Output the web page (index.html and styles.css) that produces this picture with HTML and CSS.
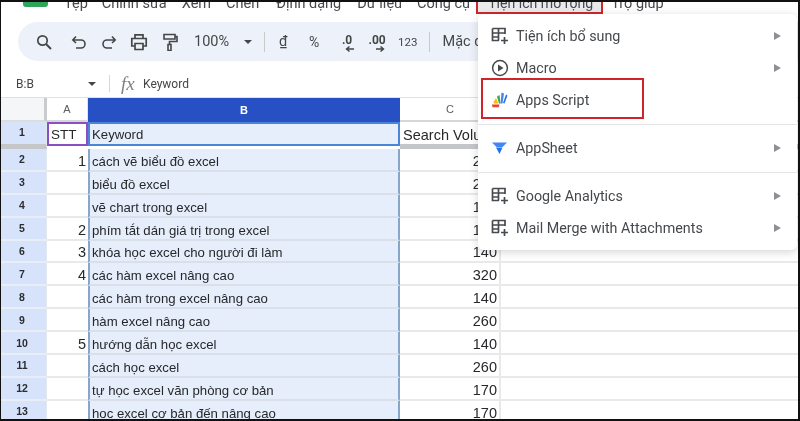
FILE: index.html
```html
<!DOCTYPE html>
<html lang="vi">
<head>
<meta charset="utf-8">
<title>Google Sheets</title>
<link rel="stylesheet" href="styles.css">
</head>
<body>
<svg class="defs" width="0" height="0" aria-hidden="true">
  <symbol id="addon" viewBox="0 0 18 18"><path d="M1.500 1.500h12.500v5.500M1.500 1.500v12h6.500M1.500 6h12M1.500 10h6.500M7.500 1.500v12" fill="none" stroke="#474a4f" stroke-width="1.700"/><path d="M13.500 10v7M10 13.500h7" fill="none" stroke="#474a4f" stroke-width="1.700"/></symbol>
</svg>
<div class="frame">
  <nav class="menubar">
    <span class="logo"></span>
    <span class="mi w1">Tệp</span>
    <span class="mi w2">Chỉnh sửa</span>
    <span class="mi w3">Xem</span>
    <span class="mi w4">Chèn</span>
    <span class="mi w5">Định dạng</span>
    <span class="mi w6">Dữ liệu</span>
    <span class="mi w7">Công cụ</span>
    <span class="mi mi-active">Tiện ích mở rộng</span>
    <span class="mi w8">Trợ giúp</span>
  </nav>
  <div class="toolbar">
    <svg class="ti t-search" viewBox="0 0 18 18"><circle cx="7.500" cy="7.500" r="4.700" fill="none" stroke="#444746" stroke-width="1.700"/><path d="M11 11l5 5" stroke="#444746" stroke-width="1.900"/></svg>
    <svg class="ti t-undo" viewBox="0 0 18 18"><path d="M6 3.500L2.800 7 6 10M3 7h8a3.600 3.600 0 0 1 0 8H6" fill="none" stroke="#444746" stroke-width="1.600"/></svg>
    <svg class="ti t-redo" viewBox="0 0 18 18"><path d="M12 3.500L15.200 7 12 10M15 7H7a3.600 3.600 0 0 0 0 8h5" fill="none" stroke="#444746" stroke-width="1.600"/></svg>
    <svg class="ti t-print" viewBox="0 0 18 18"><path d="M5 5V1.800h8V5M5 13H1.800V5.500h14.400V13H13M5 10.500h8v6H5z" fill="none" stroke="#444746" stroke-width="1.700"/></svg>
    <svg class="ti t-paint" viewBox="0 0 18 18"><path d="M3 1.500h11v4.500H3zM14 3.500h2v5H8.500v3M7 11.500h3v6H7z" fill="none" stroke="#444746" stroke-width="1.600"/></svg>
    <span class="tt t-zoom">100%</span>
    <span class="caret"></span>
    <span class="tsep t-sep1"></span>
    <span class="tt t-vnd">₫</span>
    <span class="tt t-pct">%</span>
    <span class="tt t-dec"><b>.0</b><svg class="numarrow" viewBox="0 0 10 6"><path d="M9 3H2M4.500 .5L1.500 3l3 2.500" fill="none" stroke="#444746" stroke-width="1.400"/></svg></span>
    <span class="tt t-inc"><b>.00</b><svg class="numarrow" viewBox="0 0 10 6"><path d="M1 3h7M5.500 .5L8.500 3l-3 2.500" fill="none" stroke="#444746" stroke-width="1.400"/></svg></span>
    <span class="tt t-123">123</span>
    <span class="tsep t-sep2"></span>
    <span class="tt t-font">Mặc định</span>
  </div>
  <div class="formulabar">
    <span class="namebox">B:B</span>
    <span class="caret"></span>
    <span class="fsep"></span>
    <span class="fx">fx</span>
    <span class="ftext">Keyword</span>
  </div>
  <div class="sheet">
    <div class="corner"></div>
    <div class="ch">A</div>
    <div class="ch ch-sel">B</div>
    <div class="ch">C</div>
    <div class="ch-rest"></div>

    <div class="rh rh-1">1</div>
    <div class="c hdr a1">STT</div>
    <div class="c hdr b1">Keyword</div>
    <div class="c hdr c1">Search Volume</div>
    <div class="c hdr rest"></div>

    <div class="rh">2</div><div class="c a">1</div><div class="c b">cách vẽ biểu đồ excel</div><div class="c n">210</div><div class="c rest"></div>
    <div class="rh">3</div><div class="c a"></div><div class="c b">biểu đồ excel</div><div class="c n">210</div><div class="c rest"></div>
    <div class="rh">4</div><div class="c a"></div><div class="c b">vẽ chart trong excel</div><div class="c n">170</div><div class="c rest"></div>
    <div class="rh">5</div><div class="c a">2</div><div class="c b">phím tắt dán giá trị trong excel</div><div class="c n">170</div><div class="c rest"></div>
    <div class="rh">6</div><div class="c a">3</div><div class="c b">khóa học excel cho người đi làm</div><div class="c n">140</div><div class="c rest"></div>
    <div class="rh">7</div><div class="c a">4</div><div class="c b">các hàm excel nâng cao</div><div class="c n">320</div><div class="c rest"></div>
    <div class="rh">8</div><div class="c a"></div><div class="c b">các hàm trong excel nâng cao</div><div class="c n">140</div><div class="c rest"></div>
    <div class="rh">9</div><div class="c a"></div><div class="c b">hàm excel nâng cao</div><div class="c n">260</div><div class="c rest"></div>
    <div class="rh">10</div><div class="c a">5</div><div class="c b">hướng dẫn học excel</div><div class="c n">140</div><div class="c rest"></div>
    <div class="rh">11</div><div class="c a"></div><div class="c b">cách học excel</div><div class="c n">260</div><div class="c rest"></div>
    <div class="rh">12</div><div class="c a"></div><div class="c b">tự học excel văn phòng cơ bản</div><div class="c n">170</div><div class="c rest"></div>
    <div class="rh">13</div><div class="c a"></div><div class="c b">học excel cơ bản đến nâng cao</div><div class="c n">170</div><div class="c rest"></div>
  </div>

  <div class="menu">
    <div class="item"><svg class="mic"><use href="#addon"/></svg><span class="label">Tiện ích bổ sung</span><span class="arrow"></span></div>
    <div class="item"><svg class="mic" viewBox="0 0 18 18"><circle cx="9" cy="9" r="7.400" fill="none" stroke="#474a4f" stroke-width="1.500"/><path d="M7 5.500L12.500 9 7 12.500z" fill="#474a4f"/></svg><span class="label">Macro</span><span class="arrow"></span></div>
    <div class="item"><svg class="mic" viewBox="0 0 18 18"><path d="M1 13.500h7.500l-.8 2.800H1.500z" fill="#e94235"/><path d="M2.500 11L5 7l2.500 5.500H3z" fill="#fbbc04"/><path d="M6 5.500l2.500-1.500 1 8.500H8z" fill="#34a853"/><path d="M9.500 12.500L10.500 1.500l2.500 1-1.500 10z" fill="#4285f4"/><path d="M12 12l3-8.500 1.500 1-3 8z" fill="#2f6fe0"/></svg><span class="label">Apps Script</span></div>
    <div class="msep"></div>
    <div class="item"><svg class="mic" viewBox="0 0 18 18"><path d="M1 3.500h15L11.500 8H5.500z" fill="#4285f4"/><path d="M5 8.500h6.500L8.500 15z" fill="#1a73e8"/></svg><span class="label">AppSheet</span><span class="arrow"></span></div>
    <div class="msep"></div>
    <div class="item"><svg class="mic"><use href="#addon"/></svg><span class="label">Google Analytics</span><span class="arrow"></span></div>
    <div class="item"><svg class="mic"><use href="#addon"/></svg><span class="label">Mail Merge with Attachments</span><span class="arrow"></span></div>
    <div class="redbox"></div>
  </div>
</div>
</body>
</html>
```
FILE: styles.css
```css
* { box-sizing: border-box; }
html, body { margin: 0; padding: 0; background: #000; }
.defs { position: absolute; }
.frame {
  position: relative;
  width: 800px;
  height: 421px;
  overflow: hidden;
  background: #fff;
  border: solid #111;
  border-width: 2px 2px 2px 1px;
  font-family: "Roboto", "Liberation Sans", sans-serif;
  filter: blur(0.45px);
}
.menubar {
  display: flex;
  align-items: center;
  height: 20px;
  margin-top: -9px;
  padding-left: 22px;
  font-size: 14.500px;
  color: #45484c;
  white-space: nowrap;
}
.logo { width: 25px; height: 14px; margin-top: -6px; background: #2fa55a; border-radius: 3px; }
.mi { display: block; }
.w1 { margin-left: 16px; }
.w2 { margin-left: 14px; }
.w3 { margin-left: 15px; }
.w4 { margin-left: 15px; }
.w5 { margin-left: 17px; }
.w6 { margin-left: 16px; }
.w7 { margin-left: 15px; }
.w8 { margin-left: 8px; }
.mi-active {
  margin-left: 6px;
  padding: 0 8px 0 10px;
  height: 22px;
  line-height: 18px;
  font-size: 14.100px;
  background: #e9eaec;
  border: 2px solid #d1242a;
}
.toolbar {
  display: flex;
  align-items: center;
  height: 39px;
  margin: 9px 0 0 17px;
  background: #edf2fa;
  border-radius: 20px 0 0 20px;
  color: #444746;
  white-space: nowrap;
  position: relative;
}
.ti { width: 18px; height: 18px; flex: none; }
.t-search { margin-left: 17px; }
.t-undo { margin-left: 17px; }
.t-redo { margin-left: 12px; }
.t-print { margin-left: 12px; }
.t-paint { margin-left: 13px; }
.tt { flex: none; }
.t-zoom { margin-left: 15px; font-size: 14.500px; }
.caret {
  flex: none;
  width: 0;
  height: 0;
  border: solid transparent;
  border-width: 4.500px 4px 0;
  border-top-color: #444746;
}
.toolbar .caret { margin-left: 15px; }
.tsep { flex: none; width: 1px; height: 20px; background: #c7c9cc; }
.t-sep1 { margin-left: 12px; }
.t-vnd { margin-left: 14px; font-size: 14.500px; width: 10px; text-decoration: underline; }
.t-pct { margin-left: 20px; font-size: 14px; width: 12px; }
.t-dec, .t-inc { display: flex; flex-direction: column; align-items: center; font-size: 12px; line-height: 12px; }
.t-dec b, .t-inc b { font-weight: 700; }
.numarrow { width: 10px; height: 6px; margin: 0 0 -3px 6px; }
.t-dec { margin-left: 18px; width: 16px; }
.t-inc { margin-left: 12px; width: 20px; }
.t-123 { margin-left: 11px; font-size: 11.500px; }
.t-sep2 { margin-left: 12px; }
.t-font { margin-left: 12px; font-size: 14.500px; }
.formulabar {
  display: flex;
  align-items: center;
  height: 27px;
  margin-top: 9px;
  padding-left: 15px;
  color: #444746;
  white-space: nowrap;
}
.namebox { width: 71px; font-size: 12px; }
.formulabar .caret { margin-left: 1px; }
.fsep { width: 1px; height: 17px; margin-left: 13px; background: #d5d7da; }
.fx { margin-left: 11px; width: 22px; font: italic 19px "Liberation Serif", serif; line-height: 20px; color: #7d8085; }
.ftext { font-size: 12px; }
.sheet {
  display: grid;
  grid-template-columns: 46px 41px 312px 101px 1fr;
  grid-template-rows: 24px 27px;
  grid-auto-rows: 22.900px;
  font-family: "Liberation Sans", Arial, sans-serif;
  color: #26282b;
  border-top: 1px solid #dfe0e2;
}
.corner { background: #f5f6f7; border-right: 3px solid #c9cbce; border-bottom: 2px solid #dcdddf; }
.ch {
  display: flex;
  align-items: center;
  justify-content: center;
  font-size: 11px;
  color: #5a5d61;
  border-right: 1px solid #e3e4e6;
  border-bottom: 2px solid #d4d6d9;
}
.ch-sel { background: #2750c4; color: #fff; font-weight: 700; border: 0; }
.ch-rest { border-bottom: 2px solid #e3e4e6; }
.rh {
  display: flex;
  align-items: center;
  justify-content: center;
  padding-right: 3px;
  font-size: 10.500px;
  font-weight: 700;
  color: #2b2d31;
  background: #d6e3fb;
  border-right: 1px solid #e3e7ee;
  border-bottom: 2px solid #e9edf5;
}
.rh-1 { border-bottom: 5px solid #c4c6c8; padding-bottom: 2px; }
.c {
  display: flex;
  align-items: flex-end;
  padding: 0 3px 0;
  font-size: 13.200px;
  line-height: 18px;
  white-space: nowrap;
  overflow: hidden;
  border-bottom: 2px solid #e8e9eb;
}
.hdr { border-bottom: 5px solid #c4c6c8; }
.a { justify-content: flex-end; font-size: 14.500px; padding-right: 2px; }
.b {
  background: #e6eefb;
  border-left: 2px solid #86a6cc;
  border-right: 2px solid #86a6cc;
  border-bottom-color: #d9e0ea;
  padding-left: 2px;
  line-height: 16px;
}
.n { justify-content: flex-end; font-size: 14.500px; padding-right: 2px; border-right: 2px solid #e8e9eb; }
.a1 { border: 2px solid #8b4fc4; padding-left: 2px; margin-bottom: 3px; line-height: 18px; font-size: 13.500px; }
.b1 { background: #e6eefb; border: 2px solid #4a86d8; padding-left: 2px; margin-bottom: 3px; line-height: 18px; }
.c1 { font-size: 14.500px; padding-left: 3px; }
.rest { border-right: 0; }
.menu {
  position: absolute;
  left: 477px;
  top: 12px;
  width: 319px;
  height: 236px;
  padding-top: 6px;
  background: #fff;
  border-radius: 6px;
  box-shadow: 0 2px 8px rgba(60, 64, 67, 0.22);
  color: #45484c;
  font-family: "Roboto", sans-serif;
  font-size: 14.300px;
}
.item { display: flex; align-items: center; height: 32px; padding-left: 13px; position: relative; }
.mic { width: 18px; height: 18px; flex: none; }
.label { margin-left: 7px; flex: 1; white-space: nowrap; }
.arrow {
  flex: none;
  width: 0;
  height: 0;
  margin-right: 16px;
  border: solid transparent;
  border-width: 4px 0 4px 7px;
  border-left-color: #8d9095;
}
.msep { height: 1px; margin: 8px 0 7px; background: #e4e5e7; }
.redbox {
  position: absolute;
  left: 3px;
  top: 64px;
  width: 163px;
  height: 41px;
  border: 2px solid #d1242a;
}
```
